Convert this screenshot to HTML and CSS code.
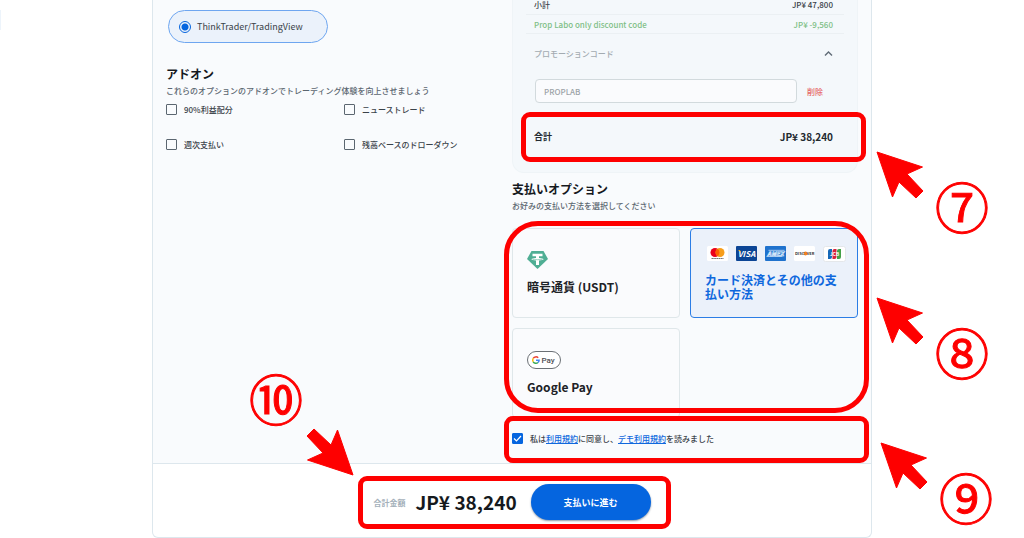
FILE: index.html
```html
<!DOCTYPE html>
<html lang="ja">
<head>
    <meta charset="UTF-8">
    <meta name="viewport" content="width=device-width, initial-scale=1.0">
    <title>お支払い</title>
    <link rel="stylesheet" href="styles.css">
</head>
<body>
    <!-- arrow shared by all the step markers -->
    <svg class="defs" width="0" height="0" aria-hidden="true">
        <symbol id="arrow" viewBox="0 0 48 48">
            <path d="M1 1 L46.500 16 L31 23 L47 40 L40 47 L23 31 L16.500 46 Z" stroke-linejoin="round"/>
        </symbol>
    </svg>
    <div class="side-tab"></div>

    <main class="checkout">
        <div class="columns">
            <section class="column">
                <label class="platform">
                    <input type="radio" name="platform" checked>
                    ThinkTrader/TradingView
                </label>
                <h2>アドオン</h2>
                <p class="hint">これらのオプションのアドオンでトレーディング体験を向上させましょう</p>
                <div class="addons">
                    <label class="check"><input type="checkbox">90%利益配分</label>
                    <label class="check"><input type="checkbox">ニューストレード</label>
                    <label class="check"><input type="checkbox">週次支払い</label>
                    <label class="check"><input type="checkbox">残高ベースのドローダウン</label>
                </div>
            </section>

            <section class="column">
                <div class="summary">
                    <div class="row subtotal"><span>小計</span><span>JP¥ 47,800</span></div>
                    <div class="row discount"><span>Prop Labo only discount code</span><span>JP¥ -9,560</span></div>
                    <button class="row promo-toggle" type="button" aria-expanded="true">
                        <span>プロモーションコード</span>
                        <svg width="9" height="7" viewBox="0 0 9 7"><path d="M1 5.500 L4.500 2 L8 5.500" fill="none" stroke="#5f6b76" stroke-width="1.400"/></svg>
                    </button>
                    <div class="promo">
                        <input type="text" placeholder="PROPLAB" aria-label="プロモーションコード">
                        <button type="button">削除</button>
                    </div>
                    <div class="row total">
                        <span class="total-label">合計</span><span>JP¥ 38,240</span>
                        <div class="mark mark-total"></div>
                    </div>
                </div>

                <h2>支払いオプション</h2>
                <p class="hint">お好みの支払い方法を選択してください</p>
                <div class="methods">
                    <button class="method" type="button">
                        <svg width="21" height="18" viewBox="0 0 21 18">
                            <path d="M4.500 0 H16.500 L21 8 L10.500 18 L0 8 Z" fill="#4fae94"/>
                            <path d="M5.500 2.700 H15.500 V5.200 H12 V7 C14.500 7.200 16.500 7.600 16.500 8.200 C16.500 8.900 14.500 9.300 12 9.400 V14 H9 V9.400 C6.500 9.300 4.500 8.900 4.500 8.200 C4.500 7.600 6.500 7.200 9 7 V5.200 H5.500 Z" fill="#fff"/>
                            <path d="M5.500 8.200 C7 8.900 14 8.900 15.500 8.200" fill="none" stroke="#4fae94" stroke-width=".6"/>
                        </svg>
                        <span>暗号通貨 (USDT)</span>
                    </button>
                    <button class="method selected" type="button" aria-pressed="true">
                        <span class="brands">
                            <svg width="21" height="15" viewBox="0 0 21 15">
                                <rect width="21" height="15" rx="1.500" fill="#fff"/>
                                <circle cx="8" cy="6.500" r="4.500" fill="#eb001b"/>
                                <circle cx="13" cy="6.500" r="4.500" fill="#f79e1b"/>
                                <path d="M10.500 2.800 A4.500 4.500 0 0 1 10.500 10.200 A4.500 4.500 0 0 1 10.500 2.800" fill="#ff5f00"/>
                                <path d="M4.500 12.500 H16.500" stroke="#777" stroke-width="1" stroke-dasharray="1.500 .3"/>
                            </svg>
                            <svg width="21" height="15" viewBox="0 0 21 15">
                                <rect width="21" height="15" rx="1" fill="#0b4595"/>
                                <text x="10.500" y="10.500" text-anchor="middle" font-size="8" font-weight="bold" font-style="italic" fill="#fff">VISA</text>
                                <path d="M2 4 h2 l1 2.500z" fill="#f2ae14"/>
                            </svg>
                            <svg width="21" height="15" viewBox="0 0 21 15">
                                <rect width="21" height="15" rx="1" fill="#1f72cd"/>
                                <path d="M3.500 4.300 H19.500 M1.500 10.500 H17.500" stroke="#c5dcf5" stroke-width=".8"/>
                                <text x="10.500" y="9.800" text-anchor="middle" font-size="6" font-weight="bold" font-style="italic" fill="none" stroke="#d8e8fa" stroke-width=".6">AMEX</text>
                            </svg>
                            <svg width="21" height="15" viewBox="0 0 21 15">
                                <rect width="21" height="15" rx="1.500" fill="#fff"/>
                                <circle cx="11.500" cy="7.500" r="1.900" fill="#f58220"/>
                                <text x="1" y="9" font-size="4" font-weight="bold" fill="#333">DISC</text>
                                <text x="20.500" y="9" text-anchor="end" font-size="4" font-weight="bold" fill="#333">VER</text>
                            </svg>
                            <svg width="23" height="16" viewBox="0 0 23 16">
                                <rect x=".5" y=".5" width="22" height="15" rx="2" fill="#fff" stroke="#e4e7ea"/>
                                <path d="M5 5 Q5 3 7 3 H9 V11 Q9 13 7 13 H5 Z" fill="#1668b8"/>
                                <path d="M9.500 5 Q9.500 3 11.500 3 H13.500 V11 Q13.500 13 11.500 13 H9.500 Z" fill="#d8213b"/>
                                <path d="M14 5 Q14 3 16 3 H18 V11 Q18 13 16 13 H14 Z" fill="#43a047"/>
                                <text x="11.500" y="10" text-anchor="middle" font-size="5" font-weight="bold" fill="#fff">JCB</text>
                            </svg>
                        </span>
                        <span>カード決済とその他の支払い方法</span>
                    </button>
                    <button class="method" type="button">
                        <svg width="34" height="18" viewBox="0 0 34 18">
                            <rect x=".5" y=".5" width="33" height="17" rx="8.500" fill="#fff" stroke="#6b7075"/>
                            <g fill="none" stroke-width="1.500">
                                <path d="M11.200 6.800 A3.200 3.200 0 0 0 6.200 7.400" stroke="#ea4335"/>
                                <path d="M6.200 7.400 A3.200 3.200 0 0 0 6.200 10.800" stroke="#fbbc04"/>
                                <path d="M6.200 10.800 A3.200 3.200 0 0 0 11 11.500" stroke="#34a853"/>
                                <path d="M11 11.500 A3.200 3.200 0 0 0 12.100 9.200 H9" stroke="#4285f4"/>
                            </g>
                            <text class="gpay" x="14.500" y="12" font-size="8" fill="#4a4e52">Pay</text>
                        </svg>
                        <span>Google Pay</span>
                    </button>
                    <div class="mark mark-methods"></div>
                </div>

                <div class="terms">
                    <input type="checkbox" id="terms" checked>
                    <label for="terms">私は<a href="#">利用規約</a>に同意し、<a href="#">デモ利用規約</a>を読みました</label>
                    <div class="mark mark-terms"></div>
                </div>
            </section>
        </div>

        <footer class="pay-bar">
            <div class="pay">
                <span class="pay-label">合計金額</span>
                <strong>JP¥ 38,240</strong>
                <button type="button">支払いに進む</button>
                <div class="mark mark-pay"></div>
            </div>
        </footer>

        <div class="step step-7"><svg class="arrow"><use href="#arrow"/></svg><span class="number">⑦</span></div>
        <div class="step step-8"><svg class="arrow"><use href="#arrow"/></svg><span class="number">⑧</span></div>
        <div class="step step-9"><svg class="arrow"><use href="#arrow"/></svg><span class="number">⑨</span></div>
        <div class="step step-10"><span class="number">⑩</span><svg class="arrow"><use href="#arrow"/></svg></div>
    </main>
</body>
</html>
```
FILE: styles.css
```css
* {
    box-sizing: border-box;
}
body {
    margin: 0;
    font-family: "Noto Sans CJK JP", sans-serif;
    font-size: 8px;
    font-weight: 500;
    color: #3a4249;
    background-color: white;
}
button, input {
    font-family: inherit;
    font-weight: inherit;
    margin: 0;
}
button {
    cursor: pointer;
}
.defs {
    position: absolute;
}
.side-tab {
    position: absolute;
    left: 0;
    top: 10px;
    width: 1px;
    height: 20px;
    background-color: #edf4fb;
}
.checkout {
    position: relative;
    max-width: 720px;
    margin: 0 auto;
    border: 1px solid #dde7ed;
    border-top: none;
    border-radius: 0 0 6px 6px;
}
.columns {
    display: grid;
    grid-template-columns: 1fr 1fr;
    padding: 0 13px;
    background-color: #f9fbfd;
}
h2 {
    margin: 8px 0 3px;
    font-size: 12px;
    line-height: 16px;
    color: #15191d;
}
.hint {
    margin: 0;
    line-height: 12px;
    color: #5b6670;
}

/* left column */
.platform {
    display: flex;
    align-items: center;
    gap: 6px;
    width: 160px;
    height: 33px;
    margin: 10px 0 23px 2px;
    padding-left: 10px;
    border: 1px solid #6ea6f0;
    border-radius: 17px;
    background-color: #ebf2fb;
    font-size: 9px;
    font-weight: normal;
}
.platform input {
    appearance: none;
    width: 12px;
    height: 12px;
    border: 1px solid #0565df;
    border-radius: 50%;
    background: radial-gradient(#0565df 3px, transparent 4px);
}
.addons {
    display: grid;
    grid-template-columns: 1fr 1fr;
    gap: 23px 10px;
    margin-top: 6px;
}
.check {
    display: flex;
    align-items: center;
    gap: 7px;
    height: 12px;
}
.check input, .terms input {
    appearance: none;
    width: 11px;
    height: 11px;
    border: 1px solid #5b6670;
    border-radius: 1px;
}

/* order summary */
.summary {
    padding: 0 13px 10px;
    border: 1px solid #eff4f7;
    border-top: none;
    border-radius: 0 0 12px 12px;
    background-color: #f4f8fb;
}
.row {
    display: flex;
    justify-content: space-between;
    align-items: center;
    padding: 0 11px 0 8px;
}
.subtotal {
    height: 15px;
    padding-bottom: 5px;
    border-bottom: 1px solid #ebf0f3;
}
.discount {
    height: 19px;
    border-bottom: 1px solid #ebf0f3;
    color: #7fbf86;
}
.promo-toggle {
    width: 100%;
    height: 38px;
    border: none;
    background: none;
    font-size: 8px;
    color: #a3abb1;
}
.promo {
    display: flex;
    align-items: center;
    gap: 10px;
    margin: 7px 21px 0 9px;
}
.promo input {
    flex: 1;
    min-width: 0;
    height: 24px;
    padding: 0 8px;
    border: 1px solid #d2dadd;
    border-radius: 4px;
    background-color: #fafbfd;
    font-size: 8px;
}
.promo input::placeholder {
    color: #9da3a8;
}
.promo button {
    padding: 0;
    border: none;
    background: none;
    font-size: 8px;
    color: #e66a6a;
}
.total {
    position: relative;
    height: 50px;
    margin-top: 9px;
    padding-bottom: 2px;
    font-size: 10px;
    font-weight: bold;
    color: #22292f;
}
.total-label {
    font-size: 9px;
}

/* payment methods */
.methods {
    position: relative;
    display: grid;
    grid-template-columns: repeat(2, minmax(0, 1fr));
    gap: 10px;
    margin-top: 16px;
}
.method {
    display: flex;
    flex-direction: column;
    justify-content: center;
    align-items: flex-start;
    gap: 11px;
    height: 90px;
    padding: 0 14px 2px;
    border: 1px solid #dfe7ea;
    border-radius: 4px;
    background-color: #fafbfd;
    font-size: 12px;
    font-weight: bold;
    line-height: 14px;
    text-align: left;
    color: #1d2227;
}
.method.selected {
    padding-bottom: 0;
    border-color: #2b7de5;
    background-color: #ebf1fa;
    color: #0f68dd;
}
.brands {
    display: flex;
    align-items: center;
    gap: 8px;
    padding-left: 2px;
}
.gpay {
    font-family: Roboto, sans-serif;
    font-weight: 500;
}
.terms {
    position: relative;
    display: flex;
    align-items: center;
    gap: 7px;
    height: 45px;
    padding-bottom: 4px;
}
.terms input:checked {
    border-color: #0565df;
    background: #0565df url("data:image/svg+xml,%3Csvg xmlns='http://www.w3.org/2000/svg' viewBox='0 0 9 9'%3E%3Cpath d='M1 4.500 L3.500 7 L8 2' fill='none' stroke='white' stroke-width='1.200'/%3E%3C/svg%3E") center no-repeat;
}
a {
    color: #0f68dd;
}

/* bottom bar */
.pay-bar {
    display: flex;
    justify-content: center;
    padding: 20px 0 17px;
    border-top: 1px solid #dde7ed;
}
.pay {
    position: relative;
    display: flex;
    align-items: center;
    gap: 10px;
}
.pay-label {
    font-weight: bold;
    color: #a4b0ba;
}
.pay strong {
    font-size: 19px;
    line-height: 24px;
    color: #15191d;
}
.pay button {
    width: 120px;
    height: 36px;
    margin-left: 4px;
    border: none;
    border-radius: 18px;
    background-color: #0565df;
    box-shadow: 0 1px 2px #8b98a8;
    color: white;
    font-size: 9px;
    font-weight: bold;
}

/* red markers */
.mark {
    position: absolute;
    border: 5px solid #fe0000;
    border-radius: 9px;
    pointer-events: none;
}
.mark-total {
    inset: 0 -22px 0 -5px;
}
.mark-methods {
    inset: -7px -11px 5px -8px;
    border-radius: 34px;
}
.mark-terms {
    inset: -2px -11px 0 -8px;
}
.mark-pay {
    inset: -8px -20px -9px -15px;
}
.step {
    position: absolute;
    display: flex;
    flex-direction: column;
    width: 113px;
    color: #fe0000;
}
.step-7 {
    left: 723px;
    top: 151px;
}
.step-8 {
    left: 723px;
    top: 297px;
}
.step-9 {
    left: 727px;
    top: 442px;
}
.step-10 {
    left: 96px;
    top: 371px;
    width: 105px;
}
.arrow {
    width: 48px;
    height: 48px;
    fill: currentColor;
    stroke: currentColor;
}
.number {
    align-self: flex-end;
    margin-top: -20px;
    font-size: 54px;
    font-weight: normal;
    line-height: 54px;
    -webkit-text-stroke: 1px currentColor;
}
.step-10 .number {
    align-self: flex-start;
    margin: 0 0 3px;
}
.step-10 .arrow {
    align-self: flex-end;
    transform: rotate(180deg);
}
```
